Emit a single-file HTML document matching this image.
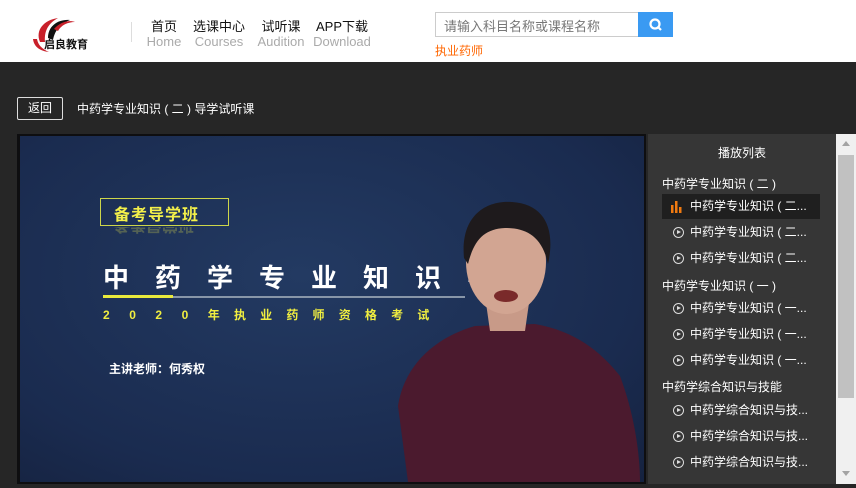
<!DOCTYPE html>
<html><head><meta charset="utf-8">
<style>
*{margin:0;padding:0;box-sizing:border-box}
body{width:856px;height:488px;overflow:hidden;background:#262626;font-family:"Liberation Sans","Noto Sans CJK SC",sans-serif;position:relative}
.hdr{position:absolute;left:0;top:0;width:856px;height:62px;background:#fff}
.nav{position:absolute;top:19px;text-align:center;line-height:15px;white-space:nowrap}
.nav .c{font-size:13px;color:#111}
.nav .e{font-size:13px;color:#aaa}
.search{position:absolute;left:435px;top:12px;width:204px;height:25px;border:1px solid #ccc;font-size:13px;color:#777;padding:3px 8px}
.sbtn{position:absolute;left:638px;top:12px;width:35px;height:25px;background:#3a9af2}
.abs{position:absolute}
.side{position:absolute;left:648px;top:134px;width:188px;height:350px;background:#363636;color:#fff;font-size:12px}
.side .t{position:absolute;left:0;width:188px;text-align:center;top:10px;font-size:12px}
.g{position:absolute;left:14px;font-size:12px}
.it{position:absolute;left:14px;width:158px;height:25px;font-size:12px;padding-left:28px;line-height:25px}
.it .ic{position:absolute;left:11px;top:7px;width:11px;height:11px;border:1.5px solid #ddd;border-radius:50%}
.it .ic:after{content:"";position:absolute;left:3px;top:2px;border-left:4px solid #ddd;border-top:2.5px solid transparent;border-bottom:2.5px solid transparent}
.big span{display:inline-block;width:52px}
.sub span{display:inline-block;width:26.2px}
</style></head><body>
<div class="hdr">
 <svg class="abs" style="left:30px;top:12px" width="70" height="42" viewBox="0 0 70 42">
  <path d="M10 30 C5 18 14 8 28 6 C19 11 14 18 15 30Z" fill="#c8202a"/>
  <path d="M18 26 C18 14 28 7 40 8 C32 11 25 17 23 28Z" fill="#111"/>
  <path d="M24 17 C31 9 40 8 45 10 C38 10 31 13 28 19Z" fill="#c8202a"/>
  <path d="M3 27 C4 35 10 39 19 40 C12 37 8 33 7 27Z" fill="#c8202a"/>
  <text x="14" y="36" font-size="11" font-weight="bold" fill="#111" font-family="Noto Sans CJK SC">启良教育</text>
 </svg>
 <div class="abs" style="left:131px;top:22px;width:1px;height:20px;background:#ddd"></div>
 <div class="nav" style="left:144px;width:40px"><div class="c">首页</div><div class="e">Home</div></div>
 <div class="nav" style="left:190px;width:58px"><div class="c">选课中心</div><div class="e">Courses</div></div>
 <div class="nav" style="left:252px;width:58px"><div class="c">试听课</div><div class="e">Audition</div></div>
 <div class="nav" style="left:310px;width:64px"><div class="c">APP下载</div><div class="e">Download</div></div>
 <div class="search">请输入科目名称或课程名称</div>
 <div class="sbtn"><svg width="35" height="25"><circle cx="17" cy="12" r="4.5" stroke="#fff" stroke-width="2.2" fill="none"/><line x1="20" y1="15" x2="23" y2="18" stroke="#fff" stroke-width="2.2"/></svg></div>
 <div class="abs" style="left:435px;top:42px;font-size:12px;color:#f60">执业药师</div>
</div>
<div class="abs" style="left:17px;top:97px;width:46px;height:23px;border:1px solid #ddd;border-radius:2px;color:#fff;font-size:12px;text-align:center;line-height:21px">返回</div>
<div class="abs" style="left:77px;top:100px;color:#fff;font-size:12px">中药学专业知识 ( 二 ) 导学试听课</div>
<div class="abs" style="left:17px;top:134px;width:629px;height:350px;background:#0e0e10"></div>
<div class="abs" style="left:20px;top:136px;width:624px;height:346px;background:radial-gradient(ellipse at 45% 40%,#233a62,#1a2b4f 70%,#15223f);overflow:hidden">
 <div class="abs" style="left:80px;top:62px;width:129px;height:28px;border:1.5px solid #cdd64a"></div>
 <div class="abs" style="left:94px;top:65px;color:#f3f04a;font-size:16px;font-weight:bold;letter-spacing:1px">备考导学班</div>
 <div class="abs" style="left:80px;top:91px;width:129px;height:12px;overflow:hidden;opacity:.25;color:#f3f04a;font-size:16px;font-weight:bold;padding-left:14px;transform:scaleY(-1)">备考导学班</div>
 <div class="abs big" style="left:83px;top:122px;color:#fff;font-size:26px;font-weight:bold;white-space:nowrap"><span>中</span><span>药</span><span>学</span><span>专</span><span>业</span><span>知</span><span>识</span><span>导</span></div>
 <div class="abs" style="left:83px;top:160px;width:362px;height:2px;background:#8896a8"></div>
 <div class="abs" style="left:83px;top:159px;width:70px;height:3px;background:#e9ea3c"></div>
 <div class="abs sub" style="left:83px;top:170px;color:#f0ee40;font-size:12px;font-weight:bold;white-space:nowrap"><span>2</span><span>0</span><span>2</span><span>0</span><span>年</span><span>执</span><span>业</span><span>药</span><span>师</span><span>资</span><span>格</span><span>考</span><span>试</span></div>
 <div class="abs" style="left:89px;top:224px;color:#fff;font-size:12px;font-weight:bold">主讲老师：何秀权</div>
 <svg class="abs" style="left:0;top:0" width="624" height="346">
  <path d="M388 346 L378 270 C385 225 420 200 455 190 L515 188 C555 195 580 215 600 240 C615 280 620 320 620 346Z" fill="#4b1a2e"/>
  <path d="M465 160 L510 160 L505 195 L470 195Z" fill="#c89a88"/>
  <ellipse cx="486" cy="126" rx="40" ry="52" fill="#d2a592"/>
  <path d="M444 122 C440 78 468 64 492 66 C524 68 536 92 528 128 C522 100 506 92 485 92 C464 93 454 104 448 128Z" fill="#1e1a1c"/>
  <ellipse cx="486" cy="160" rx="12" ry="6" fill="#7a2a2a"/>
 </svg>
</div>
<div class="side">
 <div class="t">播放列表</div>
 <div class="g" style="top:41px">中药学专业知识 ( 二 )</div>
 <div class="it" style="top:60px;background:#1f1f1f"><svg class="abs" style="left:9px;top:7px" width="12" height="12"><rect x="0" y="4" width="2.5" height="8" fill="#f07a10"/><rect x="4" y="0" width="2.5" height="12" fill="#f07a10"/><rect x="8" y="6" width="2.5" height="6" fill="#f07a10"/></svg>中药学专业知识 ( 二...</div>
 <div class="it" style="top:86px"><span class="ic"></span>中药学专业知识 ( 二...</div>
 <div class="it" style="top:112px"><span class="ic"></span>中药学专业知识 ( 二...</div>
 <div class="g" style="top:143px">中药学专业知识 ( 一 )</div>
 <div class="it" style="top:162px"><span class="ic"></span>中药学专业知识 ( 一...</div>
 <div class="it" style="top:188px"><span class="ic"></span>中药学专业知识 ( 一...</div>
 <div class="it" style="top:214px"><span class="ic"></span>中药学专业知识 ( 一...</div>
 <div class="g" style="top:244px">中药学综合知识与技能</div>
 <div class="it" style="top:264px"><span class="ic"></span>中药学综合知识与技...</div>
 <div class="it" style="top:290px"><span class="ic"></span>中药学综合知识与技...</div>
 <div class="it" style="top:316px"><span class="ic"></span>中药学综合知识与技...</div>
</div>
<div class="abs" style="left:836px;top:134px;width:20px;height:350px;background:#f0f0f0">
 <div class="abs" style="left:6px;top:7px;border-bottom:5px solid #a3a3a3;border-left:4px solid transparent;border-right:4px solid transparent"></div>
 <div class="abs" style="left:2px;top:21px;width:16px;height:243px;background:#c1c1c1"></div>
 <div class="abs" style="left:6px;top:337px;border-top:5px solid #a3a3a3;border-left:4px solid transparent;border-right:4px solid transparent"></div>
</div>
</body></html>
